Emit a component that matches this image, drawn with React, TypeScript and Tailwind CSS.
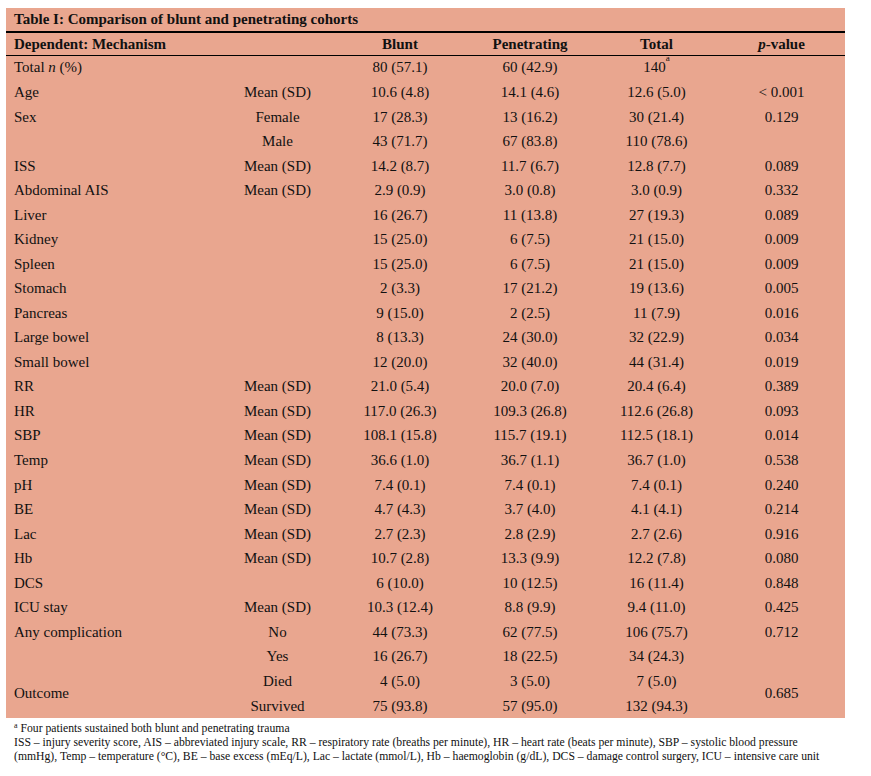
import React from "react";

type Row = { label?: string; sub?: string; b: string; p: string; t: React.ReactNode; pv?: string; outcome?: boolean };

const rows: Row[] = [
  { label: "Age", sub: "Mean (SD)", b: "10.6 (4.8)", p: "14.1 (4.6)", t: "12.6 (5.0)", pv: "< 0.001" },
  { label: "Sex", sub: "Female", b: "17 (28.3)", p: "13 (16.2)", t: "30 (21.4)", pv: "0.129" },
  { sub: "Male", b: "43 (71.7)", p: "67 (83.8)", t: "110 (78.6)" },
  { label: "ISS", sub: "Mean (SD)", b: "14.2 (8.7)", p: "11.7 (6.7)", t: "12.8 (7.7)", pv: "0.089" },
  { label: "Abdominal AIS", sub: "Mean (SD)", b: "2.9 (0.9)", p: "3.0 (0.8)", t: "3.0 (0.9)", pv: "0.332" },
  { label: "Liver", b: "16 (26.7)", p: "11 (13.8)", t: "27 (19.3)", pv: "0.089" },
  { label: "Kidney", b: "15 (25.0)", p: "6 (7.5)", t: "21 (15.0)", pv: "0.009" },
  { label: "Spleen", b: "15 (25.0)", p: "6 (7.5)", t: "21 (15.0)", pv: "0.009" },
  { label: "Stomach", b: "2 (3.3)", p: "17 (21.2)", t: "19 (13.6)", pv: "0.005" },
  { label: "Pancreas", b: "9 (15.0)", p: "2 (2.5)", t: "11 (7.9)", pv: "0.016" },
  { label: "Large bowel", b: "8 (13.3)", p: "24 (30.0)", t: "32 (22.9)", pv: "0.034" },
  { label: "Small bowel", b: "12 (20.0)", p: "32 (40.0)", t: "44 (31.4)", pv: "0.019" },
  { label: "RR", sub: "Mean (SD)", b: "21.0 (5.4)", p: "20.0 (7.0)", t: "20.4 (6.4)", pv: "0.389" },
  { label: "HR", sub: "Mean (SD)", b: "117.0 (26.3)", p: "109.3 (26.8)", t: "112.6 (26.8)", pv: "0.093" },
  { label: "SBP", sub: "Mean (SD)", b: "108.1 (15.8)", p: "115.7 (19.1)", t: "112.5 (18.1)", pv: "0.014" },
  { label: "Temp", sub: "Mean (SD)", b: "36.6 (1.0)", p: "36.7 (1.1)", t: "36.7 (1.0)", pv: "0.538" },
  { label: "pH", sub: "Mean (SD)", b: "7.4 (0.1)", p: "7.4 (0.1)", t: "7.4 (0.1)", pv: "0.240" },
  { label: "BE", sub: "Mean (SD)", b: "4.7 (4.3)", p: "3.7 (4.0)", t: "4.1 (4.1)", pv: "0.214" },
  { label: "Lac", sub: "Mean (SD)", b: "2.7 (2.3)", p: "2.8 (2.9)", t: "2.7 (2.6)", pv: "0.916" },
  { label: "Hb", sub: "Mean (SD)", b: "10.7 (2.8)", p: "13.3 (9.9)", t: "12.2 (7.8)", pv: "0.080" },
  { label: "DCS", b: "6 (10.0)", p: "10 (12.5)", t: "16 (11.4)", pv: "0.848" },
  { label: "ICU stay", sub: "Mean (SD)", b: "10.3 (12.4)", p: "8.8 (9.9)", t: "9.4 (11.0)", pv: "0.425" },
  { label: "Any complication", sub: "No", b: "44 (73.3)", p: "62 (77.5)", t: "106 (75.7)", pv: "0.712" },
  { sub: "Yes", b: "16 (26.7)", p: "18 (22.5)", t: "34 (24.3)" },
];

export default function App() {
  return (
    <div className="bg-white w-[871px] h-[776px] pt-[8px] pl-[6px] text-[#111]" style={{ fontFamily: '"Liberation Serif", "Times New Roman", serif' }}>
      <div className="w-[839px] bg-[#e9a68f] text-[15px] leading-none">
        <div className="h-[23px] flex items-center pl-[8px] font-bold">Table I: Comparison of blunt and penetrating cohorts</div>
        <div className="h-[2px] bg-black" />
        <div className="h-[22px] grid grid-cols-[214px_115px_130px_130px_123px_127px] items-center font-bold">
          <div className="pl-[8px]">Dependent: Mechanism</div>
          <div />
          <div className="text-center">Blunt</div>
          <div className="text-center">Penetrating</div>
          <div className="text-center">Total</div>
          <div className="text-center"><i>p</i>-value</div>
        </div>
        <div className="h-[1px] bg-black" />
        <div className="grid grid-cols-[214px_115px_130px_130px_123px_127px] auto-rows-[24.52px] items-center">
          <div className="pl-[8px] pb-[2px]">Total <i>n</i> (%)</div>
          <div />
          <div className="text-center pb-[2px]">80 (57.1)</div>
          <div className="text-center pb-[2px]">60 (42.9)</div>
          <div className="text-center pb-[2px]">140<sup className="text-[9px] align-super">a</sup></div>
          <div />
          {rows.map((r, i) => (
            <React.Fragment key={i}>
              <div className="pl-[8px]">{r.label ?? ""}</div>
              <div className="text-center">{r.sub ?? ""}</div>
              <div className="text-center">{r.b}</div>
              <div className="text-center">{r.p}</div>
              <div className="text-center">{r.t}</div>
              <div className="text-center">{r.pv ?? ""}</div>
            </React.Fragment>
          ))}
          <div className="pl-[8px] row-span-2">Outcome</div>
          <div className="text-center">Died</div>
          <div className="text-center">4 (5.0)</div>
          <div className="text-center">3 (5.0)</div>
          <div className="text-center">7 (5.0)</div>
          <div className="text-center row-span-2">0.685</div>
          <div className="text-center pt-[2px]">Survived</div>
          <div className="text-center pt-[2px]">75 (93.8)</div>
          <div className="text-center pt-[2px]">57 (95.0)</div>
          <div className="text-center pt-[2px]">132 (94.3)</div>
        </div>
      </div>
      <div className="pl-[8px] pt-[4px] text-[11.7px] leading-[14px]">
        <div><sup className="text-[8px]">a</sup> Four patients sustained both blunt and penetrating trauma</div>
        <div>ISS – injury severity score, AIS – abbreviated injury scale, RR – respiratory rate (breaths per minute), HR – heart rate (beats per minute), SBP – systolic blood pressure</div>
        <div>(mmHg), Temp – temperature (°C), BE – base excess (mEq/L), Lac – lactate (mmol/L), Hb – haemoglobin (g/dL), DCS – damage control surgery, ICU – intensive care unit</div>
      </div>
    </div>
  );
}
